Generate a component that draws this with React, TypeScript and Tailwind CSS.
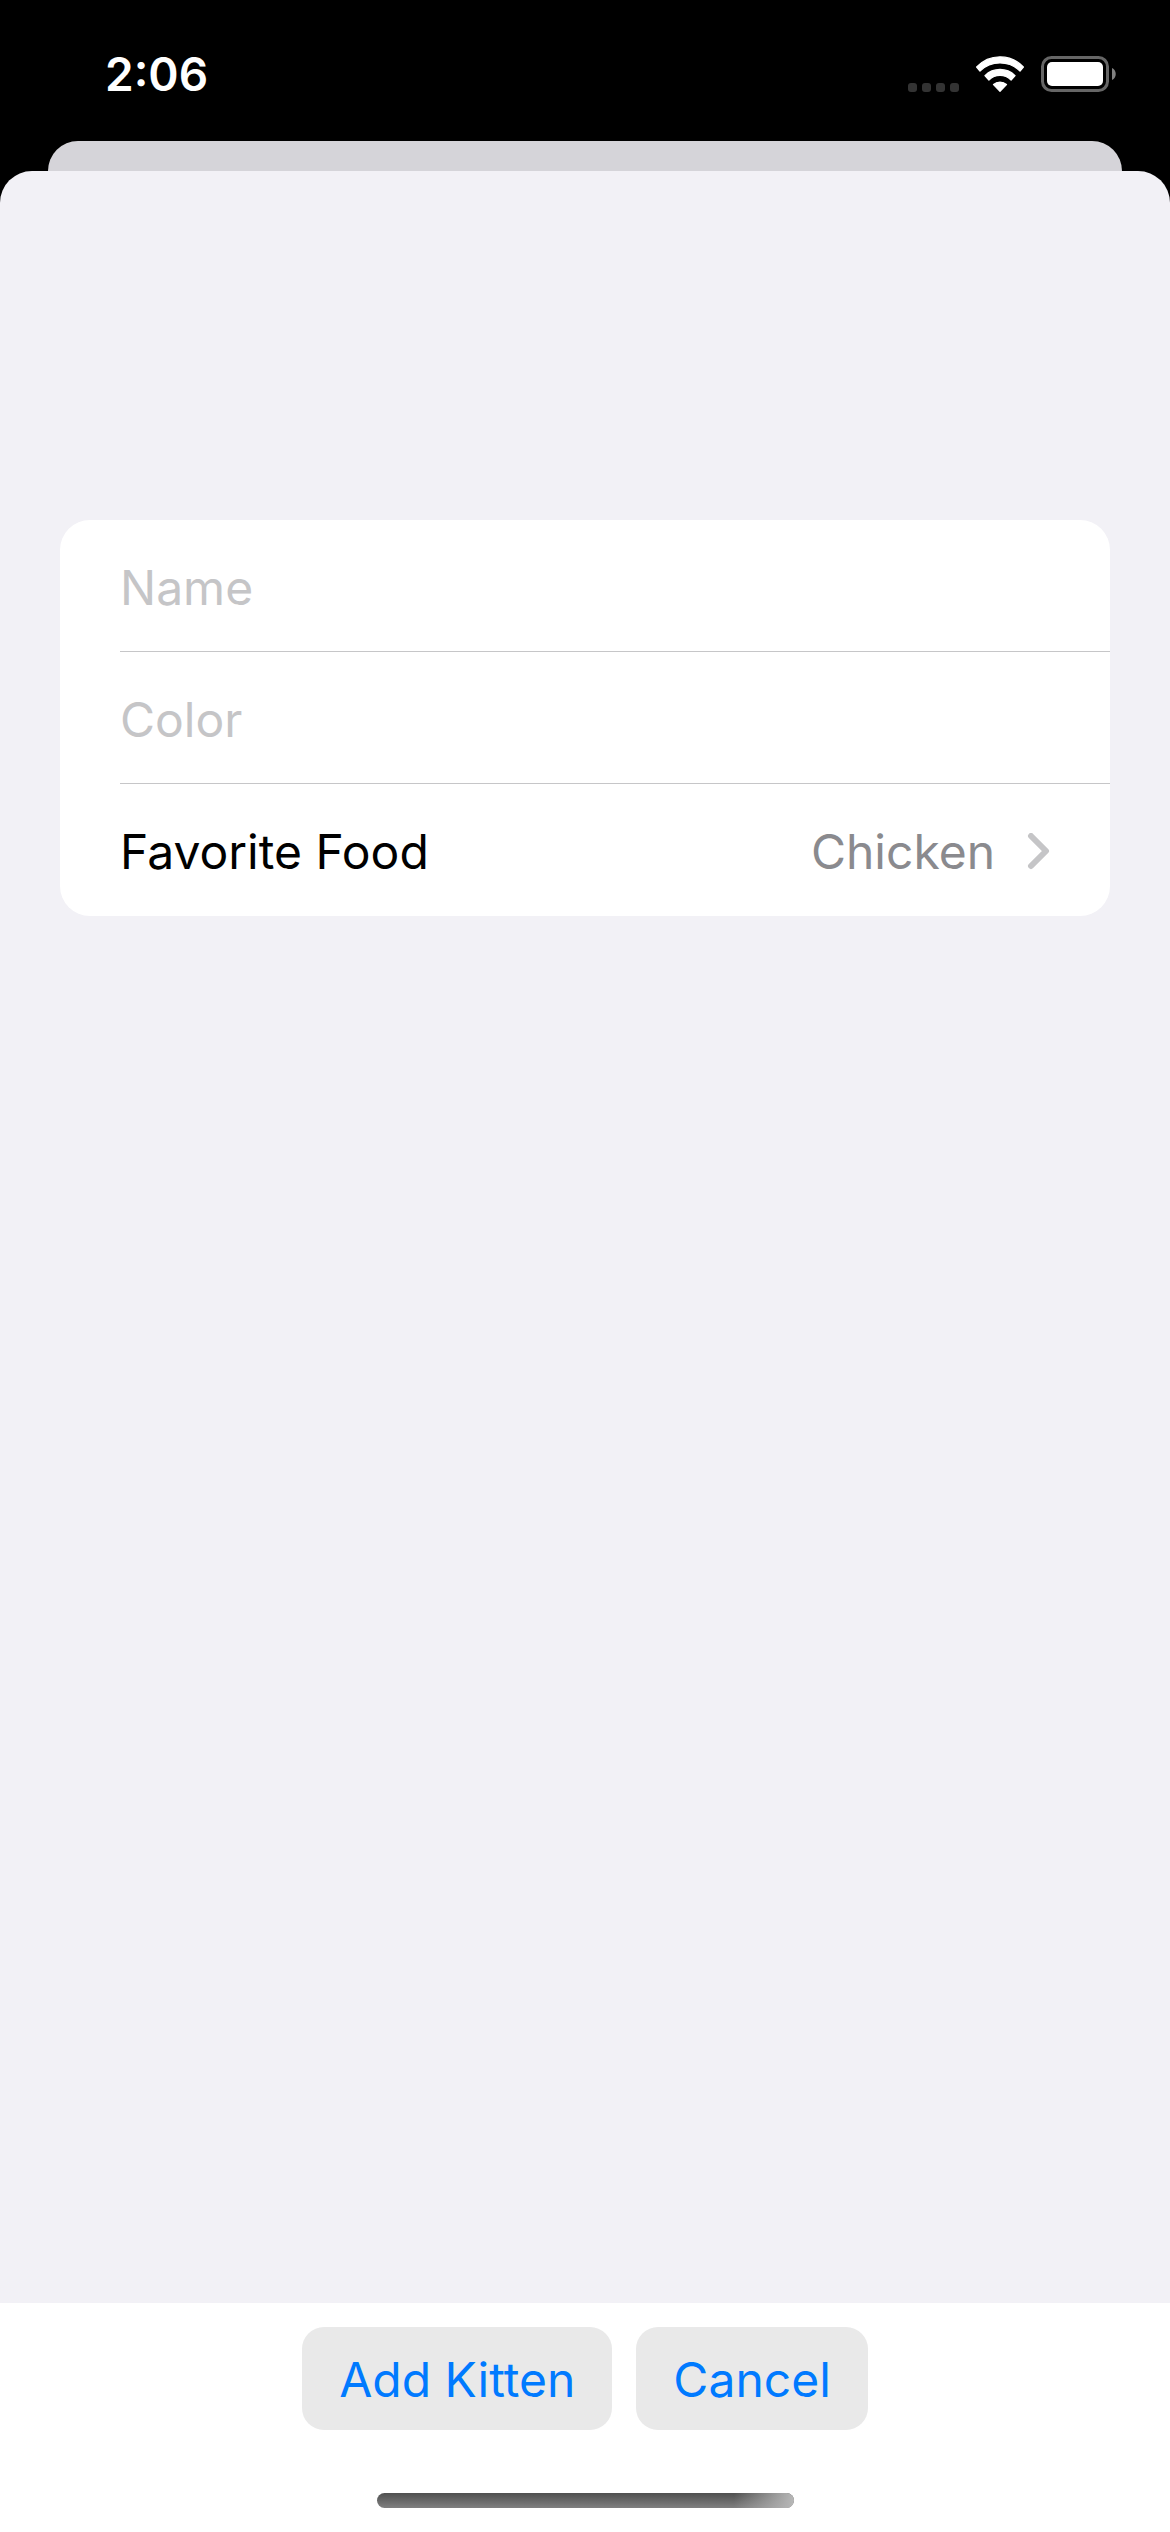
import { useState } from "react";

function SignalDots() {
  return (
    <div className="flex gap-[5px] self-end" aria-hidden="true">
      {[0, 1, 2, 3].map((i) => (
        <span key={i} className="size-[9px] rounded-[3px] bg-[#333333]" />
      ))}
    </div>
  );
}

function WifiIcon() {
  return (
    <svg
      viewBox="0 0 145 108"
      className="h-9 w-12"
      fill="white"
      stroke="white"
      strokeWidth="4"
      strokeLinejoin="round"
      aria-label="Wi-Fi"
    >
      <path d="M2 33 A96 96 0 0 1 143 33 L133 45 A87 87 0 0 0 12 45 Z" />
      <path d="M27 59 A65 65 0 0 1 118 59 L106 72 A48 48 0 0 0 39 72 Z" />
      <path d="M53 86 A29 29 0 0 1 92 86 L72.5 106 Z" />
    </svg>
  );
}

function BatteryIcon() {
  return (
    <svg viewBox="0 0 75 36" className="h-9 w-[75px]" aria-label="Battery">
      <rect
        x="1.5"
        y="1.5"
        width="65"
        height="33"
        rx="9"
        fill="none"
        stroke="#666666"
        strokeWidth="3"
      />
      <rect x="6" y="6" width="56" height="24" rx="5" fill="white" />
      <path d="M71 12 C76 14 76 22 71 24 Z" fill="#808080" />
    </svg>
  );
}

function StatusBar() {
  return (
    <header className="flex h-[141px] items-center justify-between pt-[7px] pr-[54px] pl-[105px]">
      <time className="text-[46px] font-semibold text-white">2:06</time>
      <div className="flex items-center">
        <SignalDots />
        <div className="ml-[17px] flex gap-[17px]">
          <WifiIcon />
          <BatteryIcon />
        </div>
      </div>
    </header>
  );
}

function TextRow({
  label,
  value,
  onChange,
}: {
  label: string;
  value: string;
  onChange: (value: string) => void;
}) {
  return (
    <div className="ml-15 h-33 border-b border-[#c6c6c8]">
      <input
        type="text"
        aria-label={label}
        placeholder={label}
        value={value}
        onChange={(e) => onChange(e.target.value)}
        className="h-full w-full bg-transparent pt-[3px] text-black outline-none placeholder:text-[#c5c5c7] placeholder:opacity-100"
      />
    </div>
  );
}

export default function App() {
  const [name, setName] = useState("");
  const [color, setColor] = useState("");

  return (
    <div className="flex min-h-screen flex-col bg-black font-['Inter',sans-serif] text-[48px]">
      <StatusBar />
      <div className="mx-12 h-[30px] rounded-t-[30px] bg-[#d5d4d9]" />
      <main className="flex flex-1 flex-col overflow-hidden rounded-t-[32px] bg-[#f2f1f6]">
        <form className="flex flex-1 flex-col" onSubmit={(e) => e.preventDefault()}>
          <div className="flex-1 px-15 pt-[349px]">
            <div className="overflow-hidden rounded-[30px] bg-white">
              <TextRow label="Name" value={name} onChange={setName} />
              <TextRow label="Color" value={color} onChange={setColor} />
              <button
                type="button"
                className="flex h-33 w-full items-center justify-between pt-[3px] pr-15 pl-15"
              >
                <span className="text-black">Favorite Food</span>
                <span className="flex items-center gap-8 text-[#8a8a8e]">
                  Chicken
                  <svg viewBox="0 0 23 38" className="h-[38px] w-[23px]" aria-hidden="true">
                    <path
                      d="M4 2 L19 17 L4 32"
                      fill="none"
                      stroke="#c5c5c7"
                      strokeWidth="6"
                      strokeLinecap="round"
                      strokeLinejoin="round"
                      className="translate-y-px"
                    />
                  </svg>
                </span>
              </button>
            </div>
          </div>
          <div className="flex flex-col items-center bg-white pt-6 pb-6">
            <div className="flex gap-6 text-[#007aff]">
              <button
                type="submit"
                className="h-[103px] rounded-[22px] bg-[#e9e9e9] px-[37px] pt-[3px]"
              >
                Add Kitten
              </button>
              <button
                type="button"
                className="h-[103px] rounded-[22px] bg-[#e9e9e9] px-[37px] pt-[3px]"
              >
                Cancel
              </button>
            </div>
            <div className="mt-[63px] h-[15px] w-[417px] overflow-hidden rounded-full bg-linear-to-b from-[#505050] to-[#808080]">
              <div className="ml-auto h-full w-15 bg-linear-to-r from-transparent to-[#b8b8b8]" />
            </div>
          </div>
        </form>
      </main>
    </div>
  );
}
